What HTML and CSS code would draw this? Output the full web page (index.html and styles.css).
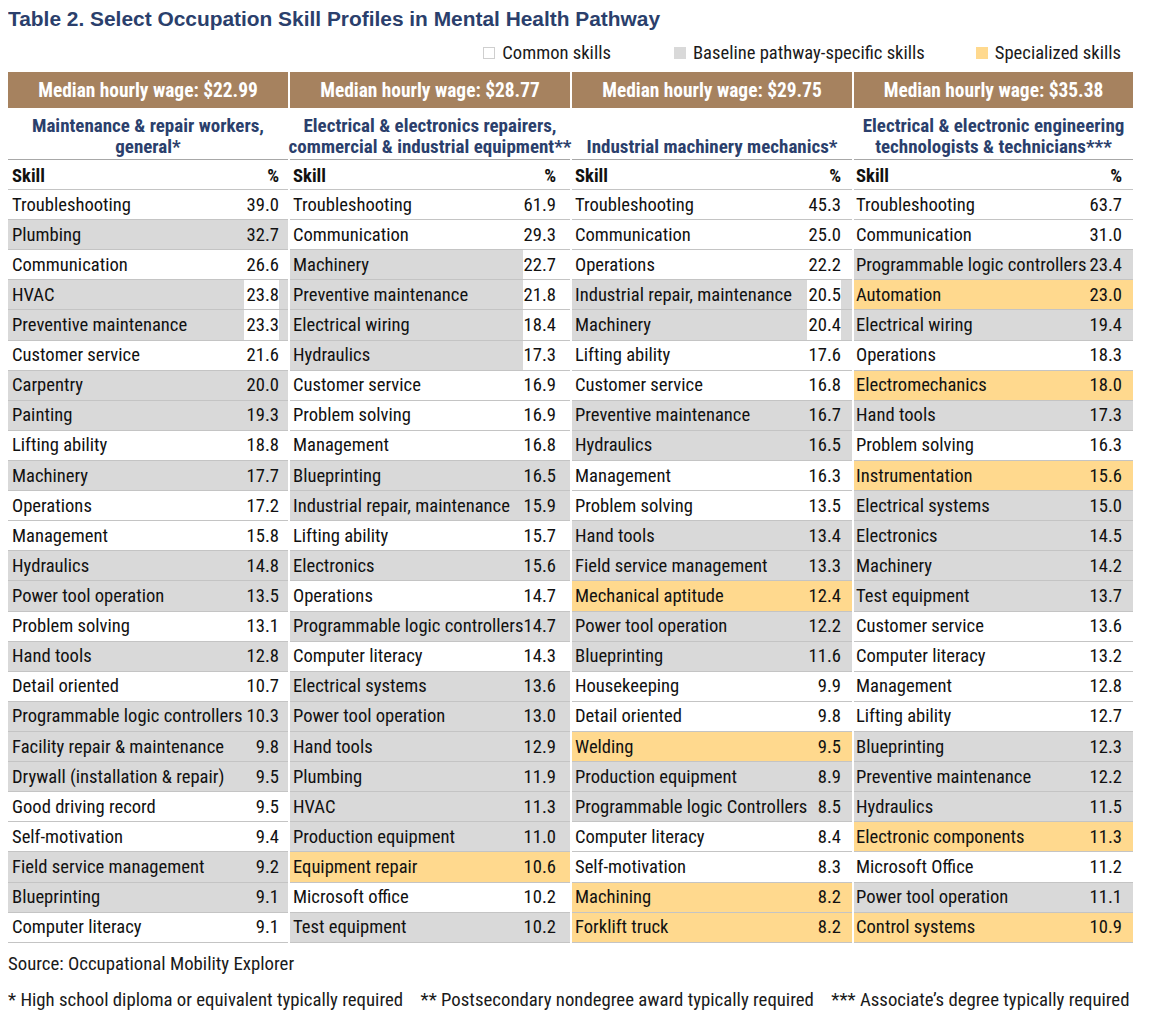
FILE: index.html
```html
<!DOCTYPE html>
<html lang="en">
<head>
<meta charset="utf-8">
<title>Table 2. Select Occupation Skill Profiles in Mental Health Pathway</title>
<link rel="stylesheet" href="styles.css">
</head>
<body>
<div class="page">
  <h1 class="title">Table 2. Select Occupation Skill Profiles in Mental Health Pathway</h1>
  <div class="legend">
    <span class="key"><span class="box box-w"></span>Common skills</span>
    <span class="key k2"><span class="box box-g"></span>Baseline pathway-specific skills</span>
    <span class="key k3"><span class="box box-y"></span>Specialized skills</span>
  </div>
  <div class="table">
    <div class="col c1">
      <div class="wage">Median hourly wage: $22.99</div>
      <div class="occ">Maintenance &amp; repair workers,<br>general*</div>
      <div class="row head"><span class="sk">Skill</span><span class="num">%</span><span class="pad"></span></div>
      <div class="row w"><span class="sk">Troubleshooting</span><span class="num">39.0</span><span class="pad"></span></div>
      <div class="row g"><span class="sk">Plumbing</span><span class="num">32.7</span><span class="pad"></span></div>
      <div class="row w"><span class="sk">Communication</span><span class="num">26.6</span><span class="pad"></span></div>
      <div class="row g nw"><span class="sk">HVAC</span><span class="num">23.8</span><span class="pad"></span></div>
      <div class="row g nw"><span class="sk">Preventive maintenance</span><span class="num">23.3</span><span class="pad"></span></div>
      <div class="row w"><span class="sk">Customer service</span><span class="num">21.6</span><span class="pad"></span></div>
      <div class="row g"><span class="sk">Carpentry</span><span class="num">20.0</span><span class="pad"></span></div>
      <div class="row g"><span class="sk">Painting</span><span class="num">19.3</span><span class="pad"></span></div>
      <div class="row w"><span class="sk">Lifting ability</span><span class="num">18.8</span><span class="pad"></span></div>
      <div class="row g"><span class="sk">Machinery</span><span class="num">17.7</span><span class="pad"></span></div>
      <div class="row w"><span class="sk">Operations</span><span class="num">17.2</span><span class="pad"></span></div>
      <div class="row w"><span class="sk">Management</span><span class="num">15.8</span><span class="pad"></span></div>
      <div class="row g"><span class="sk">Hydraulics</span><span class="num">14.8</span><span class="pad"></span></div>
      <div class="row g"><span class="sk">Power tool operation</span><span class="num">13.5</span><span class="pad"></span></div>
      <div class="row w"><span class="sk">Problem solving</span><span class="num">13.1</span><span class="pad"></span></div>
      <div class="row g"><span class="sk">Hand tools</span><span class="num">12.8</span><span class="pad"></span></div>
      <div class="row w"><span class="sk">Detail oriented</span><span class="num">10.7</span><span class="pad"></span></div>
      <div class="row g"><span class="sk">Programmable logic controllers</span><span class="num">10.3</span><span class="pad"></span></div>
      <div class="row g"><span class="sk">Facility repair &amp; maintenance</span><span class="num">9.8</span><span class="pad"></span></div>
      <div class="row g"><span class="sk">Drywall (installation &amp; repair)</span><span class="num">9.5</span><span class="pad"></span></div>
      <div class="row w"><span class="sk">Good driving record</span><span class="num">9.5</span><span class="pad"></span></div>
      <div class="row w"><span class="sk">Self-motivation</span><span class="num">9.4</span><span class="pad"></span></div>
      <div class="row g"><span class="sk">Field service management</span><span class="num">9.2</span><span class="pad"></span></div>
      <div class="row g"><span class="sk">Blueprinting</span><span class="num">9.1</span><span class="pad"></span></div>
      <div class="row w"><span class="sk">Computer literacy</span><span class="num">9.1</span><span class="pad"></span></div>
    </div>
    <div class="col c2">
      <div class="wage">Median hourly wage: $28.77</div>
      <div class="occ">Electrical &amp; electronics repairers,<br>commercial &amp; industrial equipment**</div>
      <div class="row head"><span class="sk">Skill</span><span class="num">%</span><span class="pad"></span></div>
      <div class="row w"><span class="sk">Troubleshooting</span><span class="num">61.9</span><span class="pad"></span></div>
      <div class="row w"><span class="sk">Communication</span><span class="num">29.3</span><span class="pad"></span></div>
      <div class="row g nw pw"><span class="sk">Machinery</span><span class="num">22.7</span><span class="pad"></span></div>
      <div class="row g nw pw"><span class="sk">Preventive maintenance</span><span class="num">21.8</span><span class="pad"></span></div>
      <div class="row g nw pw"><span class="sk">Electrical wiring</span><span class="num">18.4</span><span class="pad"></span></div>
      <div class="row g nw pw"><span class="sk">Hydraulics</span><span class="num">17.3</span><span class="pad"></span></div>
      <div class="row w"><span class="sk">Customer service</span><span class="num">16.9</span><span class="pad"></span></div>
      <div class="row w"><span class="sk">Problem solving</span><span class="num">16.9</span><span class="pad"></span></div>
      <div class="row w"><span class="sk">Management</span><span class="num">16.8</span><span class="pad"></span></div>
      <div class="row g"><span class="sk">Blueprinting</span><span class="num">16.5</span><span class="pad"></span></div>
      <div class="row g"><span class="sk">Industrial repair, maintenance</span><span class="num">15.9</span><span class="pad"></span></div>
      <div class="row w"><span class="sk">Lifting ability</span><span class="num">15.7</span><span class="pad"></span></div>
      <div class="row g"><span class="sk">Electronics</span><span class="num">15.6</span><span class="pad"></span></div>
      <div class="row w"><span class="sk">Operations</span><span class="num">14.7</span><span class="pad"></span></div>
      <div class="row g"><span class="sk">Programmable logic controllers</span><span class="num">14.7</span><span class="pad"></span></div>
      <div class="row w"><span class="sk">Computer literacy</span><span class="num">14.3</span><span class="pad"></span></div>
      <div class="row g"><span class="sk">Electrical systems</span><span class="num">13.6</span><span class="pad"></span></div>
      <div class="row g"><span class="sk">Power tool operation</span><span class="num">13.0</span><span class="pad"></span></div>
      <div class="row g"><span class="sk">Hand tools</span><span class="num">12.9</span><span class="pad"></span></div>
      <div class="row g"><span class="sk">Plumbing</span><span class="num">11.9</span><span class="pad"></span></div>
      <div class="row g"><span class="sk">HVAC</span><span class="num">11.3</span><span class="pad"></span></div>
      <div class="row g"><span class="sk">Production equipment</span><span class="num">11.0</span><span class="pad"></span></div>
      <div class="row y"><span class="sk">Equipment repair</span><span class="num">10.6</span><span class="pad"></span></div>
      <div class="row w"><span class="sk">Microsoft office</span><span class="num">10.2</span><span class="pad"></span></div>
      <div class="row g"><span class="sk">Test equipment</span><span class="num">10.2</span><span class="pad"></span></div>
    </div>
    <div class="col c3">
      <div class="wage">Median hourly wage: $29.75</div>
      <div class="occ">Industrial machinery mechanics*</div>
      <div class="row head"><span class="sk">Skill</span><span class="num">%</span><span class="pad"></span></div>
      <div class="row w"><span class="sk">Troubleshooting</span><span class="num">45.3</span><span class="pad"></span></div>
      <div class="row w"><span class="sk">Communication</span><span class="num">25.0</span><span class="pad"></span></div>
      <div class="row w"><span class="sk">Operations</span><span class="num">22.2</span><span class="pad"></span></div>
      <div class="row g nw"><span class="sk">Industrial repair, maintenance</span><span class="num">20.5</span><span class="pad"></span></div>
      <div class="row g nw"><span class="sk">Machinery</span><span class="num">20.4</span><span class="pad"></span></div>
      <div class="row w"><span class="sk">Lifting ability</span><span class="num">17.6</span><span class="pad"></span></div>
      <div class="row w"><span class="sk">Customer service</span><span class="num">16.8</span><span class="pad"></span></div>
      <div class="row g"><span class="sk">Preventive maintenance</span><span class="num">16.7</span><span class="pad"></span></div>
      <div class="row g"><span class="sk">Hydraulics</span><span class="num">16.5</span><span class="pad"></span></div>
      <div class="row w"><span class="sk">Management</span><span class="num">16.3</span><span class="pad"></span></div>
      <div class="row w"><span class="sk">Problem solving</span><span class="num">13.5</span><span class="pad"></span></div>
      <div class="row g"><span class="sk">Hand tools</span><span class="num">13.4</span><span class="pad"></span></div>
      <div class="row g"><span class="sk">Field service management</span><span class="num">13.3</span><span class="pad"></span></div>
      <div class="row y"><span class="sk">Mechanical aptitude</span><span class="num">12.4</span><span class="pad"></span></div>
      <div class="row g"><span class="sk">Power tool operation</span><span class="num">12.2</span><span class="pad"></span></div>
      <div class="row g"><span class="sk">Blueprinting</span><span class="num">11.6</span><span class="pad"></span></div>
      <div class="row w"><span class="sk">Housekeeping</span><span class="num">9.9</span><span class="pad"></span></div>
      <div class="row w"><span class="sk">Detail oriented</span><span class="num">9.8</span><span class="pad"></span></div>
      <div class="row y"><span class="sk">Welding</span><span class="num">9.5</span><span class="pad"></span></div>
      <div class="row g"><span class="sk">Production equipment</span><span class="num">8.9</span><span class="pad"></span></div>
      <div class="row g"><span class="sk">Programmable logic Controllers</span><span class="num">8.5</span><span class="pad"></span></div>
      <div class="row w"><span class="sk">Computer literacy</span><span class="num">8.4</span><span class="pad"></span></div>
      <div class="row w"><span class="sk">Self-motivation</span><span class="num">8.3</span><span class="pad"></span></div>
      <div class="row y"><span class="sk">Machining</span><span class="num">8.2</span><span class="pad"></span></div>
      <div class="row y"><span class="sk">Forklift truck</span><span class="num">8.2</span><span class="pad"></span></div>
    </div>
    <div class="col c4">
      <div class="wage">Median hourly wage: $35.38</div>
      <div class="occ">Electrical &amp; electronic engineering<br>technologists &amp; technicians***</div>
      <div class="row head"><span class="sk">Skill</span><span class="num">%</span><span class="pad"></span></div>
      <div class="row w"><span class="sk">Troubleshooting</span><span class="num">63.7</span><span class="pad"></span></div>
      <div class="row w"><span class="sk">Communication</span><span class="num">31.0</span><span class="pad"></span></div>
      <div class="row g"><span class="sk">Programmable logic controllers</span><span class="num">23.4</span><span class="pad"></span></div>
      <div class="row y"><span class="sk">Automation</span><span class="num">23.0</span><span class="pad"></span></div>
      <div class="row g"><span class="sk">Electrical wiring</span><span class="num">19.4</span><span class="pad"></span></div>
      <div class="row w"><span class="sk">Operations</span><span class="num">18.3</span><span class="pad"></span></div>
      <div class="row y"><span class="sk">Electromechanics</span><span class="num">18.0</span><span class="pad"></span></div>
      <div class="row g"><span class="sk">Hand tools</span><span class="num">17.3</span><span class="pad"></span></div>
      <div class="row w"><span class="sk">Problem solving</span><span class="num">16.3</span><span class="pad"></span></div>
      <div class="row y"><span class="sk">Instrumentation</span><span class="num">15.6</span><span class="pad"></span></div>
      <div class="row g"><span class="sk">Electrical systems</span><span class="num">15.0</span><span class="pad"></span></div>
      <div class="row g"><span class="sk">Electronics</span><span class="num">14.5</span><span class="pad"></span></div>
      <div class="row g"><span class="sk">Machinery</span><span class="num">14.2</span><span class="pad"></span></div>
      <div class="row g"><span class="sk">Test equipment</span><span class="num">13.7</span><span class="pad"></span></div>
      <div class="row w"><span class="sk">Customer service</span><span class="num">13.6</span><span class="pad"></span></div>
      <div class="row w"><span class="sk">Computer literacy</span><span class="num">13.2</span><span class="pad"></span></div>
      <div class="row w"><span class="sk">Management</span><span class="num">12.8</span><span class="pad"></span></div>
      <div class="row w"><span class="sk">Lifting ability</span><span class="num">12.7</span><span class="pad"></span></div>
      <div class="row g"><span class="sk">Blueprinting</span><span class="num">12.3</span><span class="pad"></span></div>
      <div class="row g"><span class="sk">Preventive maintenance</span><span class="num">12.2</span><span class="pad"></span></div>
      <div class="row g"><span class="sk">Hydraulics</span><span class="num">11.5</span><span class="pad"></span></div>
      <div class="row y"><span class="sk">Electronic components</span><span class="num">11.3</span><span class="pad"></span></div>
      <div class="row w"><span class="sk">Microsoft Office</span><span class="num">11.2</span><span class="pad"></span></div>
      <div class="row g"><span class="sk">Power tool operation</span><span class="num">11.1</span><span class="pad"></span></div>
      <div class="row y"><span class="sk">Control systems</span><span class="num">10.9</span><span class="pad"></span></div>
    </div>
  </div>
  <p class="source">Source: Occupational Mobility Explorer</p>
  <p class="notes"><span>* High school diploma or equivalent typically required</span><span>** Postsecondary nondegree award typically required</span><span>*** Associate’s degree typically required</span></p>
</div>
</body>
</html>
```

FILE: styles.css
```css
* { box-sizing: border-box; }

body {
  margin: 8px;
  background: #ffffff;
  color: #111111;
  font-family: "Roboto Condensed", "Liberation Sans Narrow", "Arial Narrow", Roboto, sans-serif;
}

.page {
  width: 1125px;
}

.title {
  margin: 0;
  height: 22px;
  font-family: "Liberation Sans", Arial, sans-serif;
  font-weight: 700;
  font-size: 20.9px;
  line-height: 22px;
  color: #2b3f6c;
}

.legend {
  display: flex;
  justify-content: flex-end;
  height: 42px;
  padding-top: 4px;
  align-items: center;
  font-size: 18.6px;
  color: #1a1a1a;
  padding-right: 12px;
}

.key {
  display: flex;
  align-items: center;
}
.k2 { margin-left: 63px; }
.k3 { margin-left: 51px; }

.box {
  width: 12px;
  height: 12px;
  margin-right: 7px;
}

.box-w { background: #ffffff; border: 1px solid #cfcfcf; }
.box-g { background: #d9d9d9; }
.box-y { background: #ffd98e; }

.table {
  display: flex;
  gap: 2px;
}

.col {
  width: 280px;
  --nw: 35px;
  --pw: 9px;
  --pl: 4px;
}
.c2 { --nw: 33px; --pw: 14px; --pl: 3px; }
.c3 { --nw: 34px; --pw: 11px; --pl: 3px; }
.c4 { width: 279px; --nw: 34px; --pw: 11px; --pl: 2px; }

.wage {
  height: 36px;
  background: #a6825f;
  color: #ffffff;
  font-weight: 700;
  font-size: 19.4px;
  display: flex;
  align-items: center;
  justify-content: center;
}

.occ {
  height: 52px;
  display: flex;
  align-items: flex-end;
  justify-content: center;
  text-align: center;
  white-space: nowrap;
  color: #2b3f6c;
  font-weight: 700;
  font-size: 19px;
  line-height: 21px;
  padding-bottom: 2px;
  border-bottom: 1px solid #a8a8a8;
}

.row {
  display: grid;
  grid-template-columns: minmax(0, 1fr) var(--nw) var(--pw);
  height: 30.12px;
  border-bottom: 1px solid #c4c4c4;
  font-size: 18.6px;
  align-items: stretch;
}

.row > span {
  display: flex;
  align-items: center;
}

.sk {
  padding-left: var(--pl);
  white-space: nowrap;
  min-width: 0;
  overflow: visible;
}

.num {
  justify-content: flex-end;
  white-space: nowrap;
}

.head { font-weight: 700; height: 30px; }
.head > span { padding-top: 3px; }

.w > span { background: #ffffff; }
.g > span { background: #d9d9d9; }
.y > span { background: #ffd98e; }
.g.nw > .num { background: #ffffff; }
.g.pw > .pad { background: #ffffff; }

.source {
  margin: 9px 0 0;
  height: 24px;
  line-height: 24px;
  font-size: 18.8px;
  color: #1a1a1a;
}

.notes {
  margin: 12px 0 0;
  line-height: 24px;
  font-size: 18.8px;
  color: #1a1a1a;
  display: flex;
  gap: 17.5px;
  white-space: nowrap;
}

.notes > span {
  flex-shrink: 0;
}
```
